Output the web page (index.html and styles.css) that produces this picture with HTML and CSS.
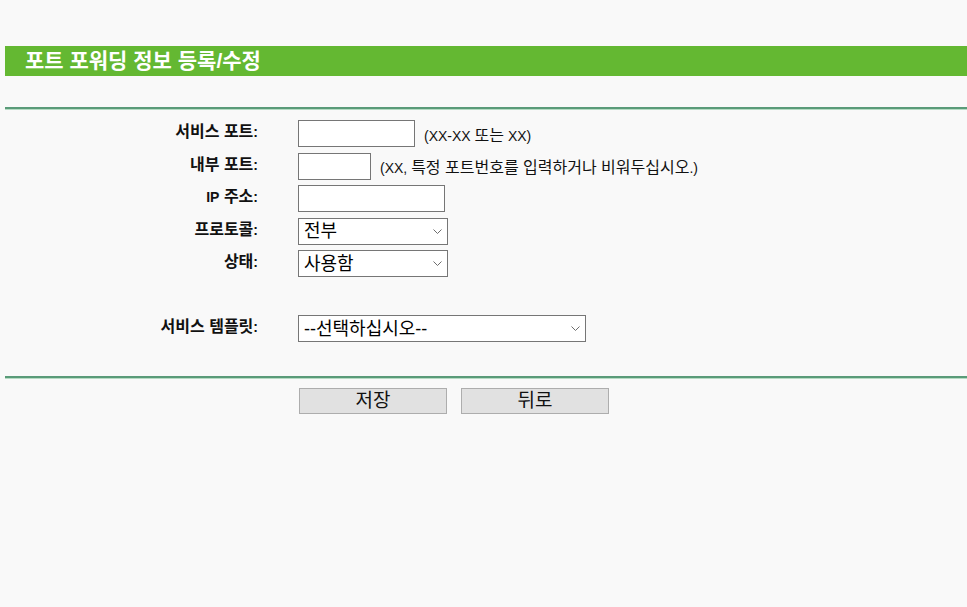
FILE: index.html
```html
<!DOCTYPE html>
<html lang="ko">
<head>
<meta charset="utf-8">
<title>포트 포워딩 정보 등록/수정</title>
<link rel="stylesheet" href="styles.css">
</head>
<body>
<div class="page">
  <h1 class="title">포트 포워딩 정보 등록/수정</h1>
  <div class="rule rule-top"></div>
  <form class="form">
    <label class="lbl" for="sp">서비스 포트<span class="lat">:</span></label>
    <div class="field"><input id="sp" class="inp inp-sp" type="text"><span class="hint">(XX-XX <span class="ko">또는</span> XX)</span></div>

    <label class="lbl" for="ip2">내부 포트<span class="lat">:</span></label>
    <div class="field"><input id="ip2" class="inp inp-int" type="text"><span class="hint">(XX, <span class="ko">특정 포트번호를 입력하거나 비워두십시오</span>.)</span></div>

    <label class="lbl" for="ipa"><span class="lat">IP</span> 주소<span class="lat">:</span></label>
    <div class="field"><input id="ipa" class="inp inp-ip" type="text"></div>

    <label class="lbl" for="pr">프로토콜<span class="lat">:</span></label>
    <div class="field"><span class="sel sel-sm"><select id="pr"><option>전부</option><option>TCP</option><option>UDP</option></select><svg class="chev" width="9" height="5" viewBox="0 0 9 5"><path d="M0.5 0.5 L4.5 4.5 L8.5 0.5" fill="none" stroke="#6d6d6d" stroke-width="1"/></svg></span></div>

    <label class="lbl" for="st">상태<span class="lat">:</span></label>
    <div class="field"><span class="sel sel-sm"><select id="st"><option>사용함</option><option>사용 안함</option></select><svg class="chev" width="9" height="5" viewBox="0 0 9 5"><path d="M0.5 0.5 L4.5 4.5 L8.5 0.5" fill="none" stroke="#6d6d6d" stroke-width="1"/></svg></span></div>

    <div class="spacer"></div><div class="spacer"></div>

    <label class="lbl" for="tp">서비스 템플릿<span class="lat">:</span></label>
    <div class="field"><span class="sel sel-lg"><select id="tp"><option>--선택하십시오--</option></select><svg class="chev" width="9" height="5" viewBox="0 0 9 5"><path d="M0.5 0.5 L4.5 4.5 L8.5 0.5" fill="none" stroke="#6d6d6d" stroke-width="1"/></svg></span></div>
  </form>
  <div class="rule rule-bottom"></div>
  <div class="buttons">
    <button class="btn" type="button">저장</button>
    <button class="btn" type="button">뒤로</button>
  </div>
</div>
</body>
</html>
```

FILE: styles.css
```css
html, body {
  margin: 0;
  padding: 0;
  background: #f9f9f9;
}
body {
  font-family: "Liberation Sans", Arial, "Noto Sans CJK KR", sans-serif;
  color: #000;
}
.page {
  padding: 46px 0 0 5px;
}
.title {
  margin: 0;
  height: 30px;
  line-height: 30px;
  background: #64b832;
  color: #fff;
  font-size: 21px;
  font-weight: bold;
  padding-left: 20px;
}
.rule {
  height: 2px;
  background: #5a9b79;
  border-bottom: 1px solid #b6dcc4;
}
.rule-top {
  margin-top: 31px;
}
.form {
  display: grid;
  grid-template-columns: 253px auto;
  column-gap: 40px;
  row-gap: 5.5px;
  grid-auto-rows: 27px;
  margin-top: 10px;
  margin-bottom: 34px;
  align-items: center;
}
.lbl {
  text-align: right;
  font-size: 16px;
  line-height: 20px;
  font-weight: bold;
  color: #111;
  padding-bottom: 3px;
}
.lat {
  font-size: 14px;
}
.field {
  display: flex;
  align-items: center;
  height: 27px;
}
.inp {
  box-sizing: border-box;
  height: 27px;
  margin: 0;
  border: 1px solid #767676;
  background: #fff;
  padding: 0 4px;
  font-size: 14px;
}
.inp-sp { width: 117px; }
.inp-int { width: 73px; }
.inp-ip { width: 147px; }
.hint {
  margin-left: 9px;
  font-size: 14px;
  color: #111;
}
.ko {
  font-size: 16px;
}
.sel {
  position: relative;
  display: inline-block;
  height: 27px;
}
.sel select {
  appearance: none;
  -webkit-appearance: none;
  box-sizing: border-box;
  width: 100%;
  height: 27px;
  margin: 0;
  border: 1px solid #767676;
  border-radius: 0;
  background: #fff;
  padding: 0 20px 0 5px;
  font-family: "Liberation Sans", Arial, "Noto Sans CJK KR", sans-serif;
  font-size: 18px;
  color: #000;
}
.sel-sm { width: 150px; }
.sel-lg { width: 288px; }
.chev {
  position: absolute;
  right: 6px;
  top: 11px;
  pointer-events: none;
}
.buttons {
  display: flex;
  gap: 14px;
  padding-left: 294px;
  margin-top: 9px;
}
.btn {
  box-sizing: border-box;
  width: 148px;
  height: 26px;
  margin: 0;
  padding: 0;
  border: 1px solid #adadad;
  background: #e1e1e1;
  font-family: "Liberation Sans", Arial, "Noto Sans CJK KR", sans-serif;
  font-size: 19px;
  line-height: 24px;
  color: #111;
}
```
